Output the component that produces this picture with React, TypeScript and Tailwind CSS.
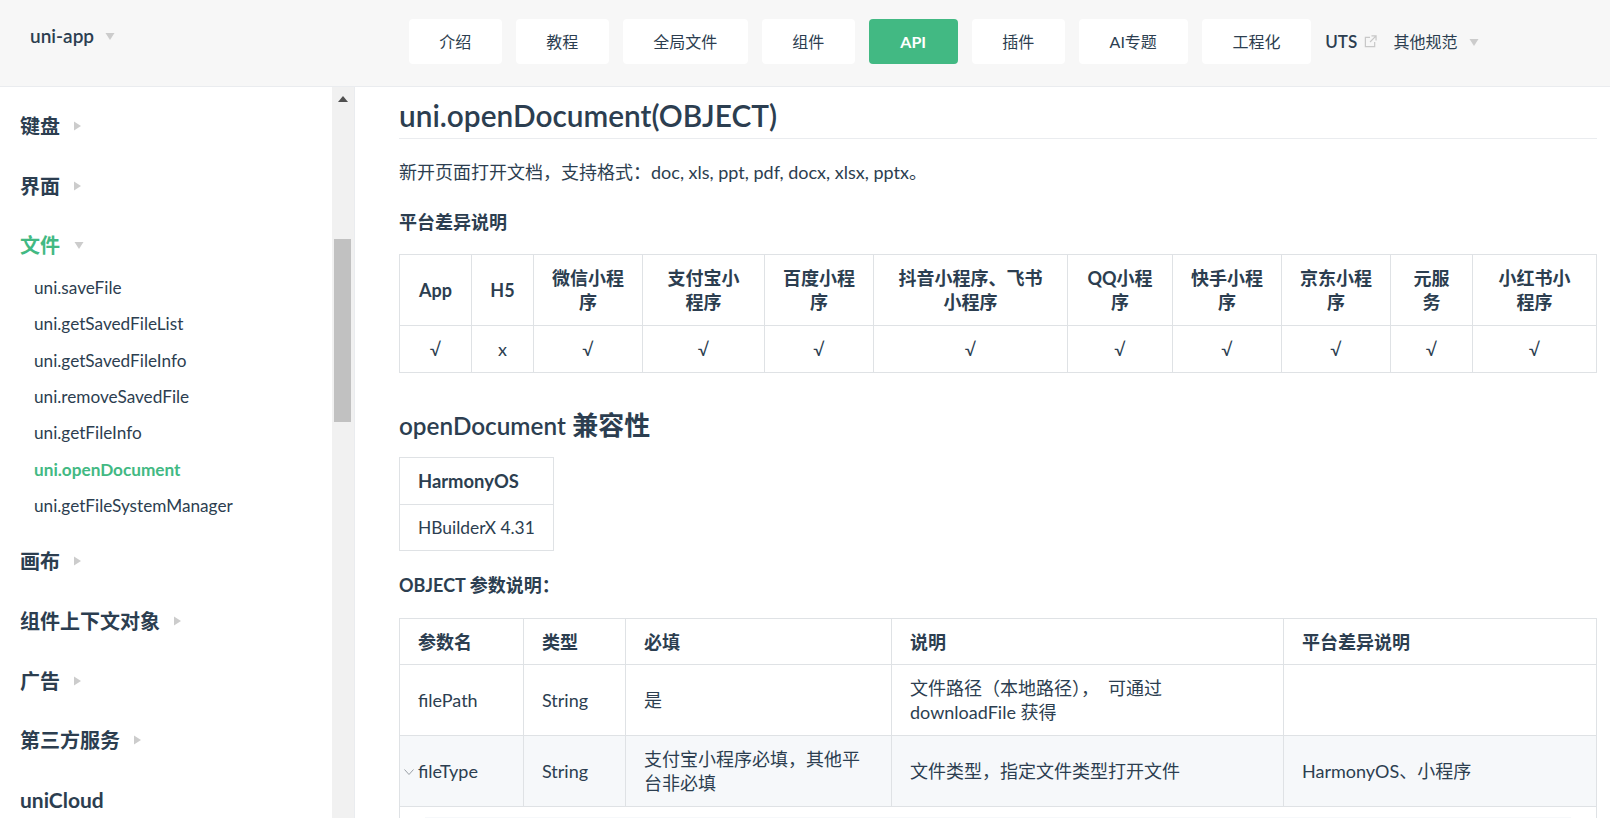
const FONT = "font-['Lato','Noto_Sans_CJK_SC','Noto_Sans',sans-serif]";

function Tri({ dir, className }: { dir: "down" | "right"; className?: string }) {
  return (
    <svg width="10" height="10" viewBox="0 0 10 10" className={className} aria-hidden="true">
      {dir === "down" ? <path d="M0.5 2h9L5 9z" fill="#ccc" /> : <path d="M2 0.5v9L9 5z" fill="#ccc" />}
    </svg>
  );
}

const tabs = [
  { t: "介绍", w: "w-[92.6px]" },
  { t: "教程", w: "w-[92.6px]" },
  { t: "全局文件", w: "w-[124.6px]" },
  { t: "组件", w: "w-[92.6px]" },
  { t: "API", w: "w-[88.6px]", active: true },
  { t: "插件", w: "w-[92.6px]" },
  { t: "AI专题", w: "w-[108.6px]" },
  { t: "工程化", w: "w-[109px]" },
];

function Group({ t, open, active, noArrow, latin }: { t: string; open?: boolean; active?: boolean; noArrow?: boolean; latin?: boolean }) {
  return (
    <div className="flex h-[59.7px] items-center pl-[20px]">
      <span className={`${latin ? "text-[21px]" : "text-[20px]"} font-bold ${active ? "text-[#42b983]" : "text-[#2c3e50]"}`}>{t}</span>
      {!noArrow && <Tri dir={open ? "down" : "right"} className={open ? "ml-[14px]" : "ml-[12px]"} />}
    </div>
  );
}

const subs = ["uni.saveFile", "uni.getSavedFileList", "uni.getSavedFileInfo", "uni.removeSavedFile", "uni.getFileInfo", "uni.openDocument", "uni.getFileSystemManager"];

const t1Cols = ["w-[72px]", "w-[62px]", "w-[109px]", "w-[122px]", "w-[109px]", "w-[194px]", "w-[105px]", "w-[109px]", "w-[109px]", "w-[82px]", "w-[124px]"];
const t1Head = ["App", "H5", "微信小程序", "支付宝小程序", "百度小程序", "抖音小程序、飞书小程序", "QQ小程序", "快手小程序", "京东小程序", "元服务", "小红书小程序"];
const t1Row = ["√", "x", "√", "√", "√", "√", "√", "√", "√", "√", "√"];

const cell = "border border-[#dfe2e5] px-[18px] py-0";

export default function App() {
  return (
    <div className={`h-[818px] w-[1610px] overflow-hidden bg-white text-[18px] leading-[24px] text-[#2c3e50] ${FONT}`}>
      <header className="flex h-[87px] items-start border-b border-[#eaecef] bg-[#f7f7f7] text-[16px]">
        <div className="flex w-[409px] items-center pl-[30px] pt-[24px]">
          <span className="text-[19px] font-semibold leading-[24px]">uni-app</span>
          <Tri dir="down" className="ml-[11px]" />
        </div>
        <nav className="flex items-center gap-[14.4px] pt-[19px]">
          {tabs.map((x) => (
            <div
              key={x.t}
              className={`flex h-[45px] items-center justify-center rounded-[4px] ${x.w} ${x.active ? "bg-[#42b983] font-bold text-white" : "bg-white"}`}
            >
              {x.t}
            </div>
          ))}
          <div className="mr-[2px] flex items-center text-[17px] font-semibold">
            UTS
            <svg width="13" height="13" viewBox="0 0 14 14" className="ml-[7px]" fill="none" stroke="#c8c8c8" strokeWidth="1.3" aria-hidden="true">
              <path d="M11.5 7.5v5h-10v-10h5" />
              <path d="M8 1h5v5M13 1L6.5 7.5" />
            </svg>
          </div>
          <div className="flex items-center">
            <span>其他规范</span>
            <Tri dir="down" className="ml-[11px]" />
          </div>
        </nav>
      </header>

      <div className="flex h-[731px]">
        <aside className="h-full w-[332px] overflow-hidden pt-[9px] text-[17.2px]">
          <Group t="键盘" />
          <Group t="界面" />
          <Group t="文件" open active />
          <ul className="-mt-[5.5px] mb-[7px] pl-[34px]">
            {subs.map((s) => (
              <li key={s} className={`flex h-[36.4px] items-center ${s === "uni.openDocument" ? "font-bold text-[#42b983]" : ""}`}>
                {s}
              </li>
            ))}
          </ul>
          <Group t="画布" />
          <Group t="组件上下文对象" />
          <Group t="广告" />
          <Group t="第三方服务" />
          <Group t="uniCloud" noArrow latin />
        </aside>

        <div className="relative h-full w-[22px] bg-[#f1f1f1]">
          <svg width="10" height="6" viewBox="0 0 10 6" className="absolute left-[6px] top-[9px]" aria-hidden="true">
            <path d="M5 0l5 6H0z" fill="#505050" />
          </svg>
          <div className="absolute left-[2px] top-[152px] h-[183px] w-[17px] bg-[#c1c1c1]" />
        </div>

        <main className="h-full flex-1 overflow-hidden border-l border-[#eaecef] pl-[44px] pr-[13px]">
          <h1 className="mt-[11px] border-b border-[#eaecef] pb-[4px] text-[29.8px] font-semibold leading-[36px]">uni.openDocument(OBJECT)</h1>
          <p className="mt-[21px]">新开页面打开文档，支持格式：doc, xls, ppt, pdf, docx, xlsx, pptx。</p>
          <p className="mt-[26px] font-bold">平台差异说明</p>
          <table className="mt-[20px] table-fixed border-collapse text-center">
            <thead>
              <tr>
                {t1Head.map((h, i) => (
                  <th key={h} className={`${cell} ${t1Cols[i]} h-[71px] font-bold`}>{h}</th>
                ))}
              </tr>
            </thead>
            <tbody>
              <tr>
                {t1Row.map((c, i) => (
                  <td key={i} className={`${cell} h-[47px]`}>{c}</td>
                ))}
              </tr>
            </tbody>
          </table>

          <h2 className="mt-[34px] text-[26px] font-semibold leading-[36px]"><span className="text-[24.3px]">openDocument</span> 兼容性</h2>
          <table className="mt-[13px] border-collapse text-left">
            <tbody>
              <tr><th className={`${cell} h-[47px] text-[18.4px] font-bold`}>HarmonyOS</th></tr>
              <tr><td className={`${cell} h-[46px] text-[17.4px]`}>HBuilderX 4.31</td></tr>
            </tbody>
          </table>

          <p className="mt-[22px] font-bold">OBJECT 参数说明：</p>
          <table className="mt-[21px] w-[1198px] table-fixed border-collapse text-left">
            <thead>
              <tr>
                <th className={`${cell} h-[46px] w-[124px] font-bold`}>参数名</th>
                <th className={`${cell} w-[102px] font-bold`}>类型</th>
                <th className={`${cell} w-[266px] font-bold`}>必填</th>
                <th className={`${cell} w-[392px] font-bold`}>说明</th>
                <th className={`${cell} font-bold`}>平台差异说明</th>
              </tr>
            </thead>
            <tbody>
              <tr>
                <td className={`${cell} h-[71px]`}>filePath</td>
                <td className={cell}>String</td>
                <td className={cell}>是</td>
                <td className={cell}>
                  文件路径（本地路径），<span className="ml-[9px]">可通过</span>
                  <br />
                  downloadFile 获得
                </td>
                <td className={cell}></td>
              </tr>
              <tr className="bg-[#f6f8fa]">
                <td className={`${cell} relative h-[71px]`}>
                  <svg width="12" height="8" viewBox="0 0 12 8" fill="none" stroke="#9aa0a6" className="absolute left-[3px] top-[32px]" aria-hidden="true">
                    <path d="M1.5 1.5L6 6.5l4.5-5" />
                  </svg>
                  fileType
                </td>
                <td className={cell}>String</td>
                <td className={cell}>支付宝小程序必填，其他平台非必填</td>
                <td className={cell}>文件类型，指定文件类型打开文件</td>
                <td className={cell}>HarmonyOS、小程序</td>
              </tr>
              <tr>
                <td colSpan={5} className="border border-[#dfe2e5] px-[25px] pt-[10px] align-top">
                  <div className="h-[60px] bg-[#f6f8fa]" />
                </td>
              </tr>
            </tbody>
          </table>
        </main>
      </div>
    </div>
  );
}
